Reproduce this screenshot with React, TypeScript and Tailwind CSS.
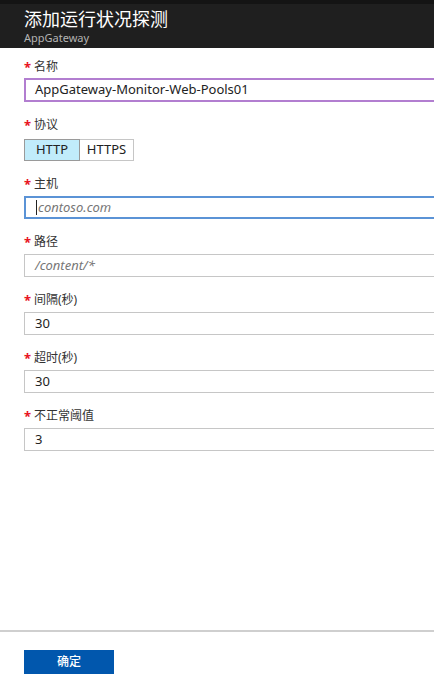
import React from "react";

const font = { fontFamily: '"Noto Sans", "Noto Sans CJK SC", sans-serif' };

function Label({ text }: { text: string }) {
  return (
    <div className="flex h-4 items-center text-[12px] leading-4 text-[#333]">
      <span className="mr-[5px] w-[5px] text-[13px] font-bold text-[#e81123]">*</span>
      <span>{text}</span>
    </div>
  );
}

function Field({
  label,
  value,
  placeholder,
  border = "border-[#c6c6c6]",
  caret,
}: {
  label: string;
  value?: string;
  placeholder?: string;
  border?: string;
  caret?: boolean;
}) {
  return (
    <div className="flex flex-col gap-[4px]">
      <Label text={label} />
      <div
        className={`flex h-[23px] w-[440px] items-center border px-[10px] text-[13px] ${border}`}
      >
        {caret ? <span className="mr-px h-[15px] w-px bg-[#222]" /> : null}
        {value ? (
          <span className="text-[#222]">{value}</span>
        ) : (
          <span className="italic text-[#777]">{placeholder}</span>
        )}
      </div>
    </div>
  );
}

export default function App() {
  return (
    <div className="flex h-[686px] w-[434px] flex-col overflow-hidden bg-white" style={font}>
      <div className="h-[48px] border-t-[4px] border-[#141414] bg-[#1f1f1f] px-6 pt-[5px]">
        <div className="text-[18px] leading-[20px] text-white">添加运行状况探测</div>
        <div className="mt-[3px] text-[11px] leading-[12px] text-[#b4b4b4]">AppGateway</div>
      </div>

      <div className="flex flex-1 flex-col gap-[15px] px-6 pt-[11px]">
        <div className="flex flex-col gap-[3px]">
          <Label text="名称" />
          <div className="flex h-[24px] w-[440px] items-center border-2 border-[#b27ed0] px-[9px] text-[13px] text-[#222]">
            AppGateway-Monitor-Web-Pools01
          </div>
        </div>

        <div className="flex flex-col gap-[6px]">
          <Label text="协议" />
          <div className="flex h-[22px] text-[13px] text-[#222]">
            <div className="flex w-[56px] items-center justify-center border border-[#9a9a9a] bg-[#c1ecfb]">
              HTTP
            </div>
            <div className="flex w-[54px] items-center justify-center border border-l-0 border-[#c6c6c6] bg-white">
              HTTPS
            </div>
          </div>
        </div>

        <Field label="主机" placeholder="contoso.com" border="border-2 border-[#5b93d6]" caret />
        <Field label="路径" placeholder="/content/*" />
        <Field label="间隔(秒)" value="30" />
        <Field label="超时(秒)" value="30" />
        <Field label="不正常阈值" value="3" />
      </div>

      <div className="h-[56px] border-t-2 border-[#cfcfcf] px-6 pt-[18px]">
        <button className="flex h-[24px] w-[90px] items-center justify-center bg-[#0157ad] text-[12px] font-medium text-white">
          确定
        </button>
      </div>
    </div>
  );
}
